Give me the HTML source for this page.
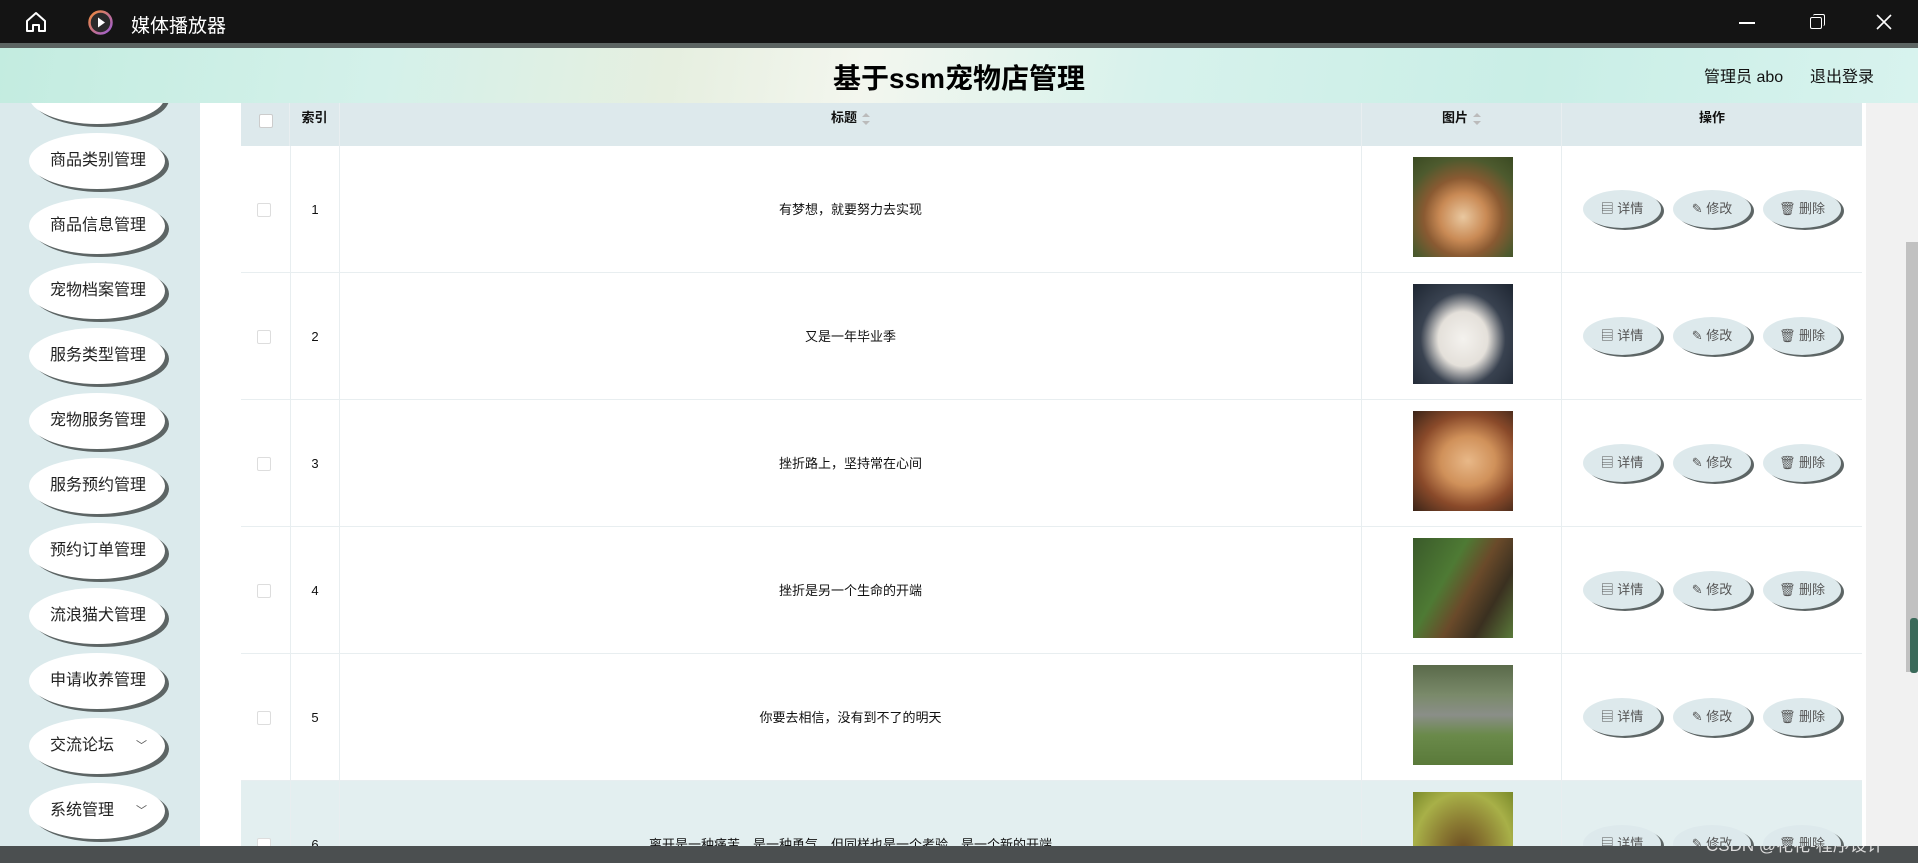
<!DOCTYPE html>
<html style="overflow:hidden;height:863px"><head><meta charset="utf-8">
<style>
*{margin:0;padding:0;box-sizing:border-box}
body{width:1918px;height:863px;overflow:hidden;background:#fff;font-family:"Liberation Sans","Noto Sans CJK SC",sans-serif;position:relative}
.tb{position:absolute;left:0;top:0;width:1918px;height:44px;background:#141414;color:#fff}
.tb .t{position:absolute;left:131px;top:11px;font-size:19px}
.strip{position:absolute;left:0;top:43px;width:1918px;height:5px;background:#5c6462}
.hd{position:absolute;left:0;top:48px;width:1918px;height:55px;background:linear-gradient(100deg,#c3ece0 0%,#d4f1ea 20%,#e6efe0 35%,#f3f6ee 45%,#d7f2ec 60%,#c9eee6 80%,#d8f3ee 100%)}
.hd h1{position:absolute;left:0;width:1918px;top:9px;text-align:center;font-size:28px;font-weight:bold;color:#000}
.hd .u{position:absolute;top:15px;font-size:16px;color:#111}
.sb{position:absolute;left:0;top:103px;width:200px;height:743px;background:#dbeaec;overflow:hidden}
.btn{position:absolute;left:29px;width:136px;height:56px;border-radius:50%;background:#fff;box-shadow:4px 3px 0 #5d6565;font-size:16px;color:#222;line-height:56px;padding-left:21px}
.btn .ar{position:absolute;right:18px;top:0;font-size:11px;color:#555}
.tbl{position:absolute;left:241px;top:103px;width:1621px}
.th{position:absolute;top:0;height:43px;background:#dde9ec;left:0;width:1621px}
.c{position:absolute;border-right:1px solid #e8eef0;font-size:13px;color:#111;text-align:center}
.row{position:absolute;left:0;width:1621px;height:127px;border-bottom:1px solid #e8eef0;background:#fff;overflow:hidden}
.cb{position:absolute;width:14px;height:14px;border:1px solid #ddd;background:#fff;border-radius:2px}
.img{position:absolute;left:1172px;width:100px;height:100px}
.ob{position:absolute;width:78px;height:38px;border-radius:50%;background:#dde9ec;box-shadow:3px 2px 0 #5d6565;font-size:13px;color:#555;line-height:38px;text-align:center}
.sort{display:inline-block;vertical-align:middle;margin-left:5px;width:8px;height:12px;position:relative}
.sort:before{content:"";position:absolute;top:0;left:0;border:4px solid transparent;border-bottom:4px solid #bbb;border-top:0}
.sort:after{content:"";position:absolute;bottom:0;left:0;border:4px solid transparent;border-top:4px solid #bbb;border-bottom:0}
</style></head><body>
<div class="tb">
<svg style="position:absolute;left:24px;top:11px" width="24" height="22" viewBox="0 0 24 22"><path d="M3 10 L12 2 L21 10 V20 H15 V14 H9 V20 H3 Z" fill="none" stroke="#fff" stroke-width="2" stroke-linejoin="round"/></svg>
<svg style="position:absolute;left:88px;top:10px" width="25" height="25" viewBox="0 0 25 25"><defs><linearGradient id="g" x1="0" y1="0" x2="1" y2="1"><stop offset="0" stop-color="#f08a3a"/><stop offset="1" stop-color="#9a5bd6"/></linearGradient></defs><circle cx="12.5" cy="12.5" r="11" fill="#2a2a2a" stroke="url(#g)" stroke-width="2.5"/><path d="M10 7.5 L17 12.5 L10 17.5Z" fill="#fff"/></svg>
<div class="t">媒体播放器</div>
<div style="position:absolute;left:1739px;top:22px;width:16px;height:1.5px;background:#fff"></div>
<div style="position:absolute;left:1810px;top:17px;width:12px;height:12px;border:1.5px solid #fff;border-radius:2px"></div>
<div style="position:absolute;left:1813px;top:14px;width:12px;height:12px;border-top:1.5px solid #fff;border-right:1.5px solid #fff;border-radius:2px"></div>
<svg style="position:absolute;left:1876px;top:14px" width="16" height="16"><path d="M1 1L15 15M15 1L1 15" stroke="#fff" stroke-width="1.6"/></svg>
</div>
<div class="strip"></div>
<div class="sb">
<div class="btn" style="top:-35px"></div>
<div class="btn" style="top:30px">商品类别管理</div>
<div class="btn" style="top:95px">商品信息管理</div>
<div class="btn" style="top:160px">宠物档案管理</div>
<div class="btn" style="top:225px">服务类型管理</div>
<div class="btn" style="top:290px">宠物服务管理</div>
<div class="btn" style="top:355px">服务预约管理</div>
<div class="btn" style="top:420px">预约订单管理</div>
<div class="btn" style="top:485px">流浪猫犬管理</div>
<div class="btn" style="top:550px">申请收养管理</div>
<div class="btn" style="top:615px">交流论坛<span class="ar">﹀</span></div>
<div class="btn" style="top:680px">系统管理<span class="ar">﹀</span></div>
</div>
<div class="hd"><h1>基于ssm宠物店管理</h1><span class="u" style="left:1704px">管理员 abo</span><span class="u" style="left:1810px">退出登录</span></div>
<div class="tbl">
<div class="th">
<div class="cb" style="left:18px;top:11px;border-color:#ccc"></div>
<div class="c" style="left:0;width:49px;height:43px"></div>
<div class="c" style="left:49px;width:50px;height:43px;line-height:30px;font-weight:bold">索引</div>
<div class="c" style="left:99px;width:1022px;height:43px;line-height:30px;font-weight:bold">标题<span class="sort"></span></div>
<div class="c" style="left:1121px;width:200px;height:43px;line-height:30px;font-weight:bold">图片<span class="sort"></span></div>
<div class="c" style="left:1321px;width:300px;height:43px;line-height:30px;font-weight:bold;border:0">操作</div>
</div>
</div>
<div style="position:absolute;left:241px;top:146px;width:1621px;height:700px;overflow:hidden">
<div class="row" style="top:0"><div class="cb" style="left:16px;top:57px"></div><div class="c" style="left:49px;top:0;width:50px;height:127px;line-height:127px;border-left:1px solid #e8eef0">1</div><div class="c" style="left:99px;width:1022px;height:127px;line-height:127px">有梦想，就要努力去实现</div><div class="c" style="left:1121px;width:200px;height:127px"></div><div class="img" style="top:11px;background:radial-gradient(circle at 50% 60%,#e9c8a0 0,#c98a55 30%,#8a5a32 50%,#4d5a2e 75%,#3a4a22 100%)"></div><div class="ob" style="left:1342px;top:44px">▤ 详情</div><div class="ob" style="left:1432px;top:44px">✎ 修改</div><div class="ob" style="left:1522px;top:44px">🗑 删除</div></div>
<div class="row" style="top:127px"><div class="cb" style="left:16px;top:57px"></div><div class="c" style="left:49px;width:50px;height:127px;line-height:127px;border-left:1px solid #e8eef0">2</div><div class="c" style="left:99px;width:1022px;height:127px;line-height:127px">又是一年毕业季</div><div class="c" style="left:1121px;width:200px;height:127px"></div><div class="img" style="top:11px;background:radial-gradient(ellipse at 50% 55%,#f4f2ee 0,#e4e0da 35%,#394250 60%,#1e2632 100%)"></div><div class="ob" style="left:1342px;top:44px">▤ 详情</div><div class="ob" style="left:1432px;top:44px">✎ 修改</div><div class="ob" style="left:1522px;top:44px">🗑 删除</div></div>
<div class="row" style="top:254px"><div class="cb" style="left:16px;top:57px"></div><div class="c" style="left:49px;width:50px;height:127px;line-height:127px;border-left:1px solid #e8eef0">3</div><div class="c" style="left:99px;width:1022px;height:127px;line-height:127px">挫折路上，坚持常在心间</div><div class="c" style="left:1121px;width:200px;height:127px"></div><div class="img" style="top:11px;background:radial-gradient(ellipse at 55% 50%,#e8b888 0,#d0915a 35%,#8a4a2a 65%,#3a2418 100%)"></div><div class="ob" style="left:1342px;top:44px">▤ 详情</div><div class="ob" style="left:1432px;top:44px">✎ 修改</div><div class="ob" style="left:1522px;top:44px">🗑 删除</div></div>
<div class="row" style="top:381px"><div class="cb" style="left:16px;top:57px"></div><div class="c" style="left:49px;width:50px;height:127px;line-height:127px;border-left:1px solid #e8eef0">4</div><div class="c" style="left:99px;width:1022px;height:127px;line-height:127px">挫折是另一个生命的开端</div><div class="c" style="left:1121px;width:200px;height:127px"></div><div class="img" style="top:11px;background:linear-gradient(120deg,#3a5a2a 0,#4e7a34 35%,#6a4a2a 55%,#3a3020 75%,#5a7a3a 100%)"></div><div class="ob" style="left:1342px;top:44px">▤ 详情</div><div class="ob" style="left:1432px;top:44px">✎ 修改</div><div class="ob" style="left:1522px;top:44px">🗑 删除</div></div>
<div class="row" style="top:508px"><div class="cb" style="left:16px;top:57px"></div><div class="c" style="left:49px;width:50px;height:127px;line-height:127px;border-left:1px solid #e8eef0">5</div><div class="c" style="left:99px;width:1022px;height:127px;line-height:127px">你要去相信，没有到不了的明天</div><div class="c" style="left:1121px;width:200px;height:127px"></div><div class="img" style="top:11px;background:linear-gradient(180deg,#5a6a4a 0,#7a8a6a 30%,#8a8e88 50%,#6a8a4a 70%,#5a7a3a 100%)"></div><div class="ob" style="left:1342px;top:44px">▤ 详情</div><div class="ob" style="left:1432px;top:44px">✎ 修改</div><div class="ob" style="left:1522px;top:44px">🗑 删除</div></div>
<div class="row" style="top:635px;height:65px;border:0;background:#e3eff0"><div class="cb" style="left:16px;top:57px"></div><div class="c" style="left:49px;width:50px;height:127px;line-height:127px;border-left:1px solid #e8eef0">6</div><div class="c" style="left:99px;width:1022px;height:127px;line-height:127px">离开是一种痛苦，是一种勇气，但同样也是一个考验，是一个新的开端</div><div class="c" style="left:1121px;width:200px;height:127px"></div><div class="img" style="top:11px;background:radial-gradient(ellipse at 50% 60%,#6a4a22 0,#8a7a32 35%,#a8b048 70%,#7a8a2a 100%)"></div><div class="ob" style="left:1342px;top:44px">▤ 详情</div><div class="ob" style="left:1432px;top:44px">✎ 修改</div><div class="ob" style="left:1522px;top:44px">🗑 删除</div></div>
</div>
<div style="position:absolute;left:1866px;top:103px;width:52px;height:743px;background:#f1f1f1"></div>
<div style="position:absolute;left:1906px;top:242px;width:12px;height:430px;background:#c1c1c1"></div>
<div style="position:absolute;left:1910px;top:618px;width:8px;height:55px;background:#3a6a5a;border-radius:3px"></div>
<div style="position:absolute;left:0;top:846px;width:1918px;height:17px;background:#4b4f50;overflow:hidden">
<div style="position:absolute;left:1706px;top:-10px;font-size:17px;line-height:20px;color:#ddd">CSDN @花花-程序设计</div>
</div>
</body></html>
